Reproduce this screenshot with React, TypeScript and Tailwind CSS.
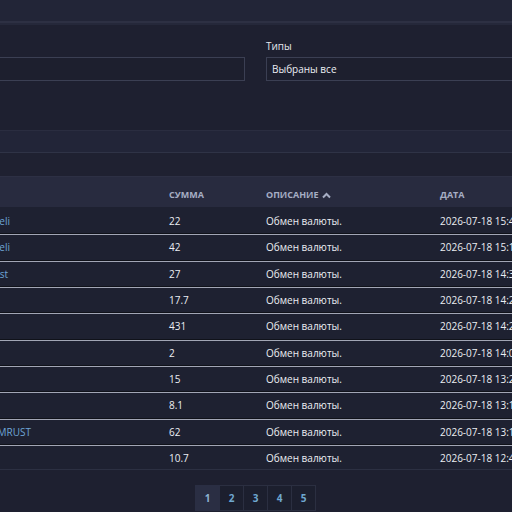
import React from "react";

type Row = { name: string; end: string; sum: string; date: string };

const rows: Row[] = [
  { name: "Gabrieli", end: "w-[110px] ml-[-100px]", sum: "22", date: "2026-07-18 15:47" },
  { name: "Gabrieli", end: "w-[110px] ml-[-100px]", sum: "42", date: "2026-07-18 15:12" },
  { name: "Alexrust", end: "w-[108px] ml-[-100px]", sum: "27", date: "2026-07-18 14:33" },
  { name: "Nikolay", end: "w-[95px] ml-[-100px]", sum: "17.7", date: "2026-07-18 14:25" },
  { name: "Nikolay", end: "w-[95px] ml-[-100px]", sum: "431", date: "2026-07-18 14:21" },
  { name: "Sergey", end: "w-[95px] ml-[-100px]", sum: "2", date: "2026-07-18 14:04" },
  { name: "Sergey", end: "w-[95px] ml-[-100px]", sum: "15", date: "2026-07-18 13:29" },
  { name: "Dmitry", end: "w-[95px] ml-[-100px]", sum: "8.1", date: "2026-07-18 13:16" },
  { name: "DOOMRUST", end: "w-[131px] ml-[-100px]", sum: "62", date: "2026-07-18 13:11" },
  { name: "Pavel", end: "w-[95px] ml-[-100px]", sum: "10.7", date: "2026-07-18 12:48" },
];

export default function App() {
  return (
    <div
      className="w-[512px] h-[512px] overflow-hidden bg-[#1e2030] text-[#eceef3]"
      style={{ fontFamily: '"Open Sans", "Noto Sans", sans-serif' }}
    >
      {/* top bar */}
      <div className="h-[21px] bg-[#222537]" />
      <div className="h-[2px] bg-[#2d3043]" />
      <div className="h-[2px] bg-[#25283a]" />

      {/* filters */}
      <div className="flex gap-[21px] pt-[14px] pb-[49px]">
        <div className="flex flex-col ml-[-10px] w-[255px] shrink-0">
          <div className="h-[15px] mb-[3px]" />
          <div className="h-[24px] border border-[#3b3f53] bg-[#1d1f2e]" />
        </div>
        <div className="flex flex-col w-[300px] shrink-0">
          <div className="h-[15px] mb-[3px] text-[10px] font-medium leading-[15px] text-[#e6e8ee]">Типы</div>
          <div className="h-[24px] border border-[#3b3f53] bg-[#1d1f2e] flex items-center pl-[5px] text-[10px] font-medium">
            Выбраны все
          </div>
        </div>
      </div>

      {/* bands */}
      <div className="h-[22px] border-t border-[#2a2d40] bg-[#222538]" />
      <div className="h-[24px] border-t border-[#2f3346] bg-[#1f2131]" />

      {/* table header */}
      <div className="h-[31px] border-t border-[#2d3044] bg-[#282b3f] flex items-start pt-[12px] text-[9px] leading-[12px] font-bold uppercase text-[#a6aec4]">
        <div className="w-[169px] shrink-0" />
        <div className="w-[97px] shrink-0">Сумма</div>
        <div className="w-[174px] shrink-0 flex items-center gap-[3px]">
          Описание
          <svg width="9" height="7" viewBox="0 0 9 7" fill="none">
            <path d="M1 5.5 L4.5 2 L8 5.5" stroke="#a6aec4" strokeWidth="2" />
          </svg>
        </div>
        <div className="shrink-0">Дата</div>
      </div>

      {/* rows */}
      <div className="flex flex-col">
        {rows.map((r, i) => {
          const base = "h-[26.33px] flex items-center pt-[2px] text-[10px] font-medium bg-[#1e2131] whitespace-nowrap";
          const border = i === 0 ? "" : "border-t border-[#10121a] shadow-[inset_0_1px_0_#a2a6b5]";
          const bottom = i === rows.length - 1 ? "border-b border-b-[#2c3042]" : "";
          return (
            <div key={i} className={`${base} ${border} ${bottom}`}>
              <div className="w-[169px] shrink-0 overflow-visible">
                <span className={`block text-right text-[#6ea5d6] ${r.end}`}>{r.name}</span>
              </div>
              <div className="w-[97px] shrink-0">{r.sum}</div>
              <div className="w-[174px] shrink-0">Обмен валюты.</div>
              <div className="shrink-0">{r.date}</div>
            </div>
          );
        })}
      </div>

      {/* pagination */}
      <div className="flex pt-[15px] pl-[195px]">
        {["1", "2", "3", "4", "5"].map((p, i) => (
          <div
            key={p}
            className={
              i === 0
                ? "w-[25px] h-[26px] flex items-center justify-center text-[10px] font-bold text-[#8db2cf] bg-[#2a2e43] border border-[#2a2e43]"
                : "w-[24px] h-[26px] flex items-center justify-center text-[10px] font-bold text-[#6fa8d0] bg-[#1c1f2e] border border-l-0 border-[#2b2f41]"
            }
          >
            {p}
          </div>
        ))}
      </div>
    </div>
  );
}
